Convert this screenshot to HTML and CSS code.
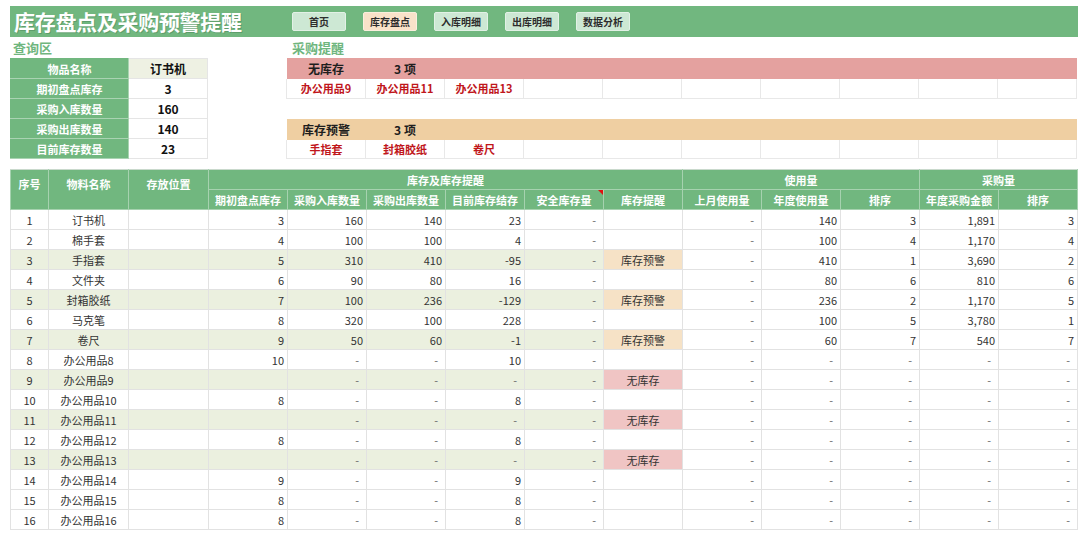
FILE: index.html
```html
<!DOCTYPE html>
<html lang="zh-CN">
<head>
<meta charset="utf-8">
<title>库存盘点及采购预警提醒</title>
<link rel="stylesheet" href="styles.css">
</head>
<body>
<header class="topbar">
  <h1 class="title">库存盘点及采购预警提醒</h1>
  <nav class="nav">
    <span class="btn">首页</span>
    <span class="btn active">库存盘点</span>
    <span class="btn">入库明细</span>
    <span class="btn">出库明细</span>
    <span class="btn">数据分析</span>
  </nav>
</header>

<section class="top">
  <div class="query">
    <div class="sec-label">查询区</div>
    <table class="qtable">
      <tr><th>物品名称</th><td class="first">订书机</td></tr>
      <tr><th>期初盘点库存</th><td>3</td></tr>
      <tr><th>采购入库数量</th><td>160</td></tr>
      <tr><th>采购出库数量</th><td>140</td></tr>
      <tr><th>目前库存数量</th><td>23</td></tr>
    </table>
  </div>
  <div class="remind">
    <div class="sec-label sec-label-r">采购提醒</div>
    <table class="rtable red">
      <tr class="rhead"><td>无库存</td><td>3 项</td><td></td><td></td><td></td><td></td><td></td><td></td><td></td><td></td></tr>
      <tr class="rbody"><td>办公用品9</td><td>办公用品11</td><td>办公用品13</td><td></td><td></td><td></td><td></td><td></td><td></td><td></td></tr>
    </table>
    <table class="rtable peach">
      <tr class="rhead"><td>库存预警</td><td>3 项</td><td></td><td></td><td></td><td></td><td></td><td></td><td></td><td></td></tr>
      <tr class="rbody"><td>手指套</td><td>封箱胶纸</td><td>卷尺</td><td></td><td></td><td></td><td></td><td></td><td></td><td></td></tr>
    </table>
  </div>
</section>

<section class="main">
<table class="mtable">
  <colgroup>
    <col class="w-no"><col class="w-name"><col class="w-loc">
    <col class="w-n"><col class="w-n"><col class="w-n"><col class="w-n"><col class="w-n"><col class="w-n">
    <col class="w-n"><col class="w-n"><col class="w-n"><col class="w-n"><col class="w-n">
  </colgroup>
  <thead>
    <tr>
      <th rowspan="2" class="tall">序号</th>
      <th rowspan="2" class="tall">物料名称</th>
      <th rowspan="2" class="tall">存放位置</th>
      <th colspan="6">库存及库存提醒</th>
      <th colspan="3">使用量</th>
      <th colspan="2">采购量</th>
    </tr>
    <tr>
      <th>期初盘点库存</th><th>采购入库数量</th><th>采购出库数量</th><th>目前库存结存</th><th class="cmt">安全库存量<span class="tri"></span></th><th>库存提醒</th>
      <th>上月使用量</th><th>年度使用量</th><th>排序</th>
      <th>年度采购金额</th><th>排序</th>
    </tr>
  </thead>
  <tbody>
    <tr><td class="c">1</td><td class="c">订书机</td><td></td><td class="n">3</td><td class="n">160</td><td class="n">140</td><td class="n">23</td><td class="d">-</td><td></td><td class="d">-</td><td class="n">140</td><td class="n">3</td><td class="n">1,891</td><td class="n">3</td></tr>
    <tr><td class="c">2</td><td class="c">棉手套</td><td></td><td class="n">4</td><td class="n">100</td><td class="n">100</td><td class="n">4</td><td class="d">-</td><td></td><td class="d">-</td><td class="n">100</td><td class="n">4</td><td class="n">1,170</td><td class="n">4</td></tr>
    <tr class="hl"><td class="c">3</td><td class="c">手指套</td><td></td><td class="n">5</td><td class="n">310</td><td class="n">410</td><td class="n">-95</td><td class="d">-</td><td class="warn">库存预警</td><td class="d">-</td><td class="n">410</td><td class="n">1</td><td class="n">3,690</td><td class="n">2</td></tr>
    <tr><td class="c">4</td><td class="c">文件夹</td><td></td><td class="n">6</td><td class="n">90</td><td class="n">80</td><td class="n">16</td><td class="d">-</td><td></td><td class="d">-</td><td class="n">80</td><td class="n">6</td><td class="n">810</td><td class="n">6</td></tr>
    <tr class="hl"><td class="c">5</td><td class="c">封箱胶纸</td><td></td><td class="n">7</td><td class="n">100</td><td class="n">236</td><td class="n">-129</td><td class="d">-</td><td class="warn">库存预警</td><td class="d">-</td><td class="n">236</td><td class="n">2</td><td class="n">1,170</td><td class="n">5</td></tr>
    <tr><td class="c">6</td><td class="c">马克笔</td><td></td><td class="n">8</td><td class="n">320</td><td class="n">100</td><td class="n">228</td><td class="d">-</td><td></td><td class="d">-</td><td class="n">100</td><td class="n">5</td><td class="n">3,780</td><td class="n">1</td></tr>
    <tr class="hl"><td class="c">7</td><td class="c">卷尺</td><td></td><td class="n">9</td><td class="n">50</td><td class="n">60</td><td class="n">-1</td><td class="d">-</td><td class="warn">库存预警</td><td class="d">-</td><td class="n">60</td><td class="n">7</td><td class="n">540</td><td class="n">7</td></tr>
    <tr><td class="c">8</td><td class="c">办公用品8</td><td></td><td class="n">10</td><td class="d">-</td><td class="d">-</td><td class="n">10</td><td class="d">-</td><td></td><td class="d">-</td><td class="d">-</td><td class="d">-</td><td class="d">-</td><td class="d">-</td></tr>
    <tr class="hl"><td class="c">9</td><td class="c">办公用品9</td><td></td><td></td><td class="d">-</td><td class="d">-</td><td class="d">-</td><td class="d">-</td><td class="none">无库存</td><td class="d">-</td><td class="d">-</td><td class="d">-</td><td class="d">-</td><td class="d">-</td></tr>
    <tr><td class="c">10</td><td class="c">办公用品10</td><td></td><td class="n">8</td><td class="d">-</td><td class="d">-</td><td class="n">8</td><td class="d">-</td><td></td><td class="d">-</td><td class="d">-</td><td class="d">-</td><td class="d">-</td><td class="d">-</td></tr>
    <tr class="hl"><td class="c">11</td><td class="c">办公用品11</td><td></td><td></td><td class="d">-</td><td class="d">-</td><td class="d">-</td><td class="d">-</td><td class="none">无库存</td><td class="d">-</td><td class="d">-</td><td class="d">-</td><td class="d">-</td><td class="d">-</td></tr>
    <tr><td class="c">12</td><td class="c">办公用品12</td><td></td><td class="n">8</td><td class="d">-</td><td class="d">-</td><td class="n">8</td><td class="d">-</td><td></td><td class="d">-</td><td class="d">-</td><td class="d">-</td><td class="d">-</td><td class="d">-</td></tr>
    <tr class="hl"><td class="c">13</td><td class="c">办公用品13</td><td></td><td></td><td class="d">-</td><td class="d">-</td><td class="d">-</td><td class="d">-</td><td class="none">无库存</td><td class="d">-</td><td class="d">-</td><td class="d">-</td><td class="d">-</td><td class="d">-</td></tr>
    <tr><td class="c">14</td><td class="c">办公用品14</td><td></td><td class="n">9</td><td class="d">-</td><td class="d">-</td><td class="n">9</td><td class="d">-</td><td></td><td class="d">-</td><td class="d">-</td><td class="d">-</td><td class="d">-</td><td class="d">-</td></tr>
    <tr><td class="c">15</td><td class="c">办公用品15</td><td></td><td class="n">8</td><td class="d">-</td><td class="d">-</td><td class="n">8</td><td class="d">-</td><td></td><td class="d">-</td><td class="d">-</td><td class="d">-</td><td class="d">-</td><td class="d">-</td></tr>
    <tr><td class="c">16</td><td class="c">办公用品16</td><td></td><td class="n">8</td><td class="d">-</td><td class="d">-</td><td class="n">8</td><td class="d">-</td><td></td><td class="d">-</td><td class="d">-</td><td class="d">-</td><td class="d">-</td><td class="d">-</td></tr>
  </tbody>
</table>
</section>
</body>
</html>
```

FILE: styles.css
```css
* { box-sizing: border-box; }
html, body { margin: 0; padding: 0; background: #ffffff; }
body {
  font-family: "Noto Sans CJK SC", "Noto Sans", sans-serif;
  color: #333333;
  font-size: 11px;
  width: 1080px;
  height: 535px;
  overflow: hidden;
}

/* ---------- top bar ---------- */
.topbar {
  margin: 6px 2px 0 10px;
  height: 31px;
  background: #71b77f;
  display: flex;
  align-items: center;
}
.title {
  margin: 0;
  padding-left: 4px;
  font-size: 21px;
  line-height: 31px;
  font-weight: 700;
  color: #ffffff;
  letter-spacing: -0.3px;
  text-shadow: 1px 1px 0 rgba(60, 110, 70, 0.35);
  width: 282px;
}
.nav { display: flex; gap: 17px; }
.btn {
  width: 54px;
  height: 19px;
  line-height: 17px;
  text-align: center;
  font-size: 10px;
  font-weight: 700;
  color: #2d2d2d;
  background: #cde8d4;
  border: 1px solid #e2f1e6;
  border-radius: 2px;
}
.btn.active { background: #f9e2c9; border-color: #fbeedd; }

/* ---------- top section ---------- */
.top {
  margin-left: 10px;
  display: grid;
  grid-template-columns: 197px 790px;
  column-gap: 79px;
}
.sec-label {
  height: 21px;
  line-height: 21px;
  font-size: 13px;
  font-weight: 700;
  color: #6fb67e;
  padding-left: 3px;
}
.sec-label-r { padding-left: 6px; }

.qtable {
  border-collapse: collapse;
  table-layout: fixed;
  width: 197px;
}
.qtable tr { height: 20px; }
.qtable th {
  width: 118px;
  background: #71b77f;
  color: #ffffff;
  font-weight: 700;
  font-size: 11px;
  border: 1px solid #a9d3b2;
  border-left-color: #71b77f;
  padding: 0;
  line-height: 18px;
  text-align: center;
}
.qtable tr:first-child th { border-top-color: #71b77f; }
.qtable td {
  width: 79px;
  text-align: center;
  font-weight: 700;
  font-size: 12px;
  color: #111111;
  border: 1px solid #e5e5e5;
  padding: 0;
  line-height: 18px;
}
.qtable td.first { background: #eef1e3; }

.rtable {
  border-collapse: collapse;
  table-layout: fixed;
  width: 790px;
}
.rtable td {
  width: 79px;
  padding: 0;
  text-align: center;
}
.rtable .rhead { height: 21px; }
.rtable .rhead td {
  font-size: 12px;
  font-weight: 700;
  color: #1e1e1e;
  line-height: 21px;
}
.rtable.red .rhead td { background: #e4a19f; }
.rtable.peach .rhead td { background: #efcfa2; }
.rtable .rbody { height: 19px; }
.rtable .rbody td {
  border: 1px solid #e8e8e8;
  border-top: none;
  color: #c0161b;
  font-weight: 700;
  font-size: 11px;
  line-height: 18px;
}
.rtable.peach { margin-top: 20px; }

/* ---------- main table ---------- */
.main { margin: 10px 0 0 10px; }
.mtable {
  border-collapse: collapse;
  table-layout: fixed;
  width: 1067px;
}
.w-no { width: 38px; }
.w-name { width: 80px; }
.w-loc { width: 80px; }
.w-n { width: 79px; }

.mtable thead tr { height: 20px; }
.mtable th {
  background: #71b77f;
  color: #ffffff;
  font-weight: 700;
  font-size: 11px;
  line-height: 18px;
  padding: 0;
  text-align: center;
  border: 1px solid #a6d2af;
  white-space: nowrap;
}
.mtable thead tr:first-child th { border-top-color: #c9d9cc; }
.mtable th.tall {
  vertical-align: top;
  padding-top: 5px;
}
.mtable th.cmt { position: relative; }
.tri {
  position: absolute;
  top: 0;
  right: 0;
  width: 0;
  height: 0;
  border-top: 5px solid #e01010;
  border-left: 5px solid transparent;
}

.mtable tbody tr { height: 20px; }
.mtable td {
  border: 1px solid #e2e2e2;
  padding: 0 3px 0 3px;
  font-size: 11px;
  line-height: 18px;
  color: #333333;
  white-space: nowrap;
}
.mtable td.c { text-align: center; }
.mtable td.n { text-align: right; }
.mtable td.d { text-align: right; padding-right: 7px; color: #6a6a6a; }
.mtable tr.hl td { background: #ebf0df; }
.mtable tr.hl td:nth-child(n+10) { background: #ffffff; }
.mtable tr td.warn { background: #f6e2c6; text-align: center; }
.mtable tr td.none { background: #f0c5c4; text-align: center; }
```
